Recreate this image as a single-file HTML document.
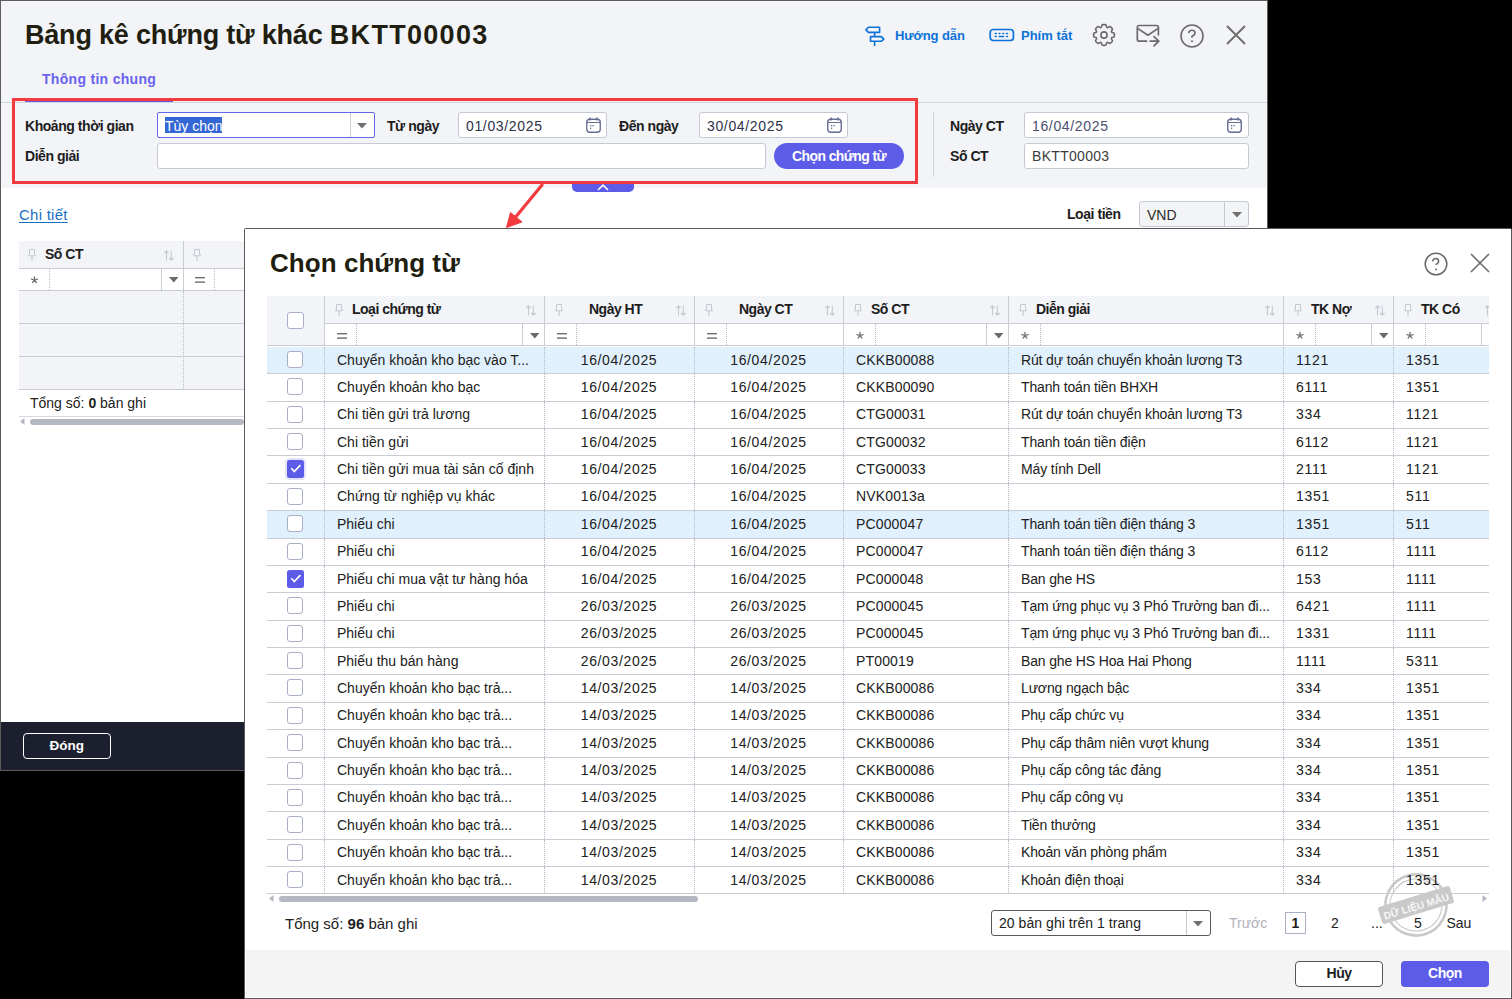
<!DOCTYPE html>
<html><head><meta charset="utf-8"><style>*{box-sizing:border-box;margin:0;padding:0}
html,body{width:1512px;height:999px;overflow:hidden;background:#000;font-family:"Liberation Sans",sans-serif;color:#212121}
body{position:relative}
.a{position:absolute}
.t{position:absolute;white-space:nowrap;line-height:1}
svg{position:absolute;overflow:visible}
b{font-weight:bold}</style></head>
<body>
<div class="a" style="left:0px;top:0px;width:1268px;height:771px;background:#5c5c5c"></div>
<div class="a" style="left:1px;top:1px;width:1266px;height:769px;background:#fff"></div>
<div class="a" style="left:1px;top:1px;width:1266px;height:187px;background:#f3f4f8"></div>
<div class="a" style="left:1px;top:102px;width:1266px;height:1px;background:#d3d6de"></div>
<div class="t" style="left:25px;top:22.14px;font-size:27px;font-weight:bold;color:#1f1e10;"><span style="letter-spacing:-0.2px">Bảng kê chứng từ khác </span><span style="letter-spacing:1.3px">BKTT00003</span></div>
<div class="t" style="left:42px;top:72.15px;font-size:14px;font-weight:bold;color:#6a63ee;letter-spacing:0.3px;">Thông tin chung</div>
<div class="a" style="left:25px;top:100px;width:148px;height:2px;background:#5b5ce6"></div>
<svg style="left:860px;top:22px" width="30" height="28" viewBox="0 0 30 28"><path d="M8.4 5.3 H19.6 V10.4 H8.4 L5.9 7.9 Z M10.5 14.6 H21.3 L23.8 17.1 L21.3 19.3 H10.5 Z M14.6 10.4 V14.6 M14.6 19.3 V23.4" fill="none" stroke="#0b72d9" stroke-width="1.6" stroke-linejoin="round" stroke-linecap="round"/></svg>
<div class="t" style="left:895px;top:29.00px;font-size:13px;font-weight:bold;color:#0b72d9;letter-spacing:-0.1px;">Hướng dẫn</div>
<svg style="left:989px;top:28px" width="26" height="14" viewBox="0 0 26 14"><rect x="1.2" y="1.5" width="23.2" height="11" rx="3" fill="none" stroke="#0b72d9" stroke-width="1.7"/><path d="M6.3 5.5h1M10 5.5h1M13.8 5.5h1M17.5 5.5h1M6.3 8.5h1M10.2 8.5h4.4M17.5 8.5h1" stroke="#0b72d9" stroke-width="1.5" stroke-linecap="round"/></svg>
<div class="t" style="left:1021px;top:29.00px;font-size:13px;font-weight:bold;color:#0b72d9;">Phím tắt</div>
<svg style="left:1092px;top:23px" width="24" height="24" viewBox="0 0 24 24"><path d="M12.00 1.60 L12.27 1.60 L12.54 1.61 L12.82 1.63 L13.09 1.66 L13.36 1.69 L13.63 1.73 L13.87 1.91 L14.07 2.24 L14.24 2.69 L14.36 3.18 L14.47 3.65 L14.58 4.05 L14.72 4.32 L14.90 4.44 L15.10 4.52 L15.29 4.60 L15.51 4.64 L15.80 4.55 L16.15 4.35 L16.57 4.09 L17.00 3.83 L17.43 3.63 L17.81 3.54 L18.11 3.59 L18.33 3.75 L18.54 3.92 L18.75 4.09 L18.96 4.27 L19.16 4.46 L19.35 4.65 L19.54 4.84 L19.73 5.04 L19.91 5.25 L20.08 5.46 L20.25 5.67 L20.41 5.89 L20.46 6.19 L20.37 6.57 L20.17 7.00 L19.91 7.43 L19.65 7.85 L19.45 8.20 L19.36 8.49 L19.40 8.71 L19.48 8.90 L19.56 9.10 L19.68 9.28 L19.95 9.42 L20.35 9.53 L20.82 9.64 L21.31 9.76 L21.76 9.93 L22.09 10.13 L22.27 10.37 L22.31 10.64 L22.34 10.91 L22.37 11.18 L22.39 11.46 L22.40 11.73 L22.40 12.00 L22.40 12.27 L22.39 12.54 L22.37 12.82 L22.34 13.09 L22.31 13.36 L22.27 13.63 L22.09 13.87 L21.76 14.07 L21.31 14.24 L20.82 14.36 L20.35 14.47 L19.95 14.58 L19.68 14.72 L19.56 14.90 L19.48 15.10 L19.40 15.29 L19.36 15.51 L19.45 15.80 L19.65 16.15 L19.91 16.57 L20.17 17.00 L20.37 17.43 L20.46 17.81 L20.41 18.11 L20.25 18.33 L20.08 18.54 L19.91 18.75 L19.73 18.96 L19.54 19.16 L19.35 19.35 L19.16 19.54 L18.96 19.73 L18.75 19.91 L18.54 20.08 L18.33 20.25 L18.11 20.41 L17.81 20.46 L17.43 20.37 L17.00 20.17 L16.57 19.91 L16.15 19.65 L15.80 19.45 L15.51 19.36 L15.29 19.40 L15.10 19.48 L14.90 19.56 L14.72 19.68 L14.58 19.95 L14.47 20.35 L14.36 20.82 L14.24 21.31 L14.07 21.76 L13.87 22.09 L13.63 22.27 L13.36 22.31 L13.09 22.34 L12.82 22.37 L12.54 22.39 L12.27 22.40 L12.00 22.40 L11.73 22.40 L11.46 22.39 L11.18 22.37 L10.91 22.34 L10.64 22.31 L10.37 22.27 L10.13 22.09 L9.93 21.76 L9.76 21.31 L9.64 20.82 L9.53 20.35 L9.42 19.95 L9.28 19.68 L9.10 19.56 L8.90 19.48 L8.71 19.40 L8.49 19.36 L8.20 19.45 L7.85 19.65 L7.43 19.91 L7.00 20.17 L6.57 20.37 L6.19 20.46 L5.89 20.41 L5.67 20.25 L5.46 20.08 L5.25 19.91 L5.04 19.73 L4.84 19.54 L4.65 19.35 L4.46 19.16 L4.27 18.96 L4.09 18.75 L3.92 18.54 L3.75 18.33 L3.59 18.11 L3.54 17.81 L3.63 17.43 L3.83 17.00 L4.09 16.57 L4.35 16.15 L4.55 15.80 L4.64 15.51 L4.60 15.29 L4.52 15.10 L4.44 14.90 L4.32 14.72 L4.05 14.58 L3.65 14.47 L3.18 14.36 L2.69 14.24 L2.24 14.07 L1.91 13.87 L1.73 13.63 L1.69 13.36 L1.66 13.09 L1.63 12.82 L1.61 12.54 L1.60 12.27 L1.60 12.00 L1.60 11.73 L1.61 11.46 L1.63 11.18 L1.66 10.91 L1.69 10.64 L1.73 10.37 L1.91 10.13 L2.24 9.93 L2.69 9.76 L3.18 9.64 L3.65 9.53 L4.05 9.42 L4.32 9.28 L4.44 9.10 L4.52 8.90 L4.60 8.71 L4.64 8.49 L4.55 8.20 L4.35 7.85 L4.09 7.43 L3.83 7.00 L3.63 6.57 L3.54 6.19 L3.59 5.89 L3.75 5.67 L3.92 5.46 L4.09 5.25 L4.27 5.04 L4.46 4.84 L4.65 4.65 L4.84 4.46 L5.04 4.27 L5.25 4.09 L5.46 3.92 L5.67 3.75 L5.89 3.59 L6.19 3.54 L6.57 3.63 L7.00 3.83 L7.43 4.09 L7.85 4.35 L8.20 4.55 L8.49 4.64 L8.71 4.60 L8.90 4.52 L9.10 4.44 L9.28 4.32 L9.42 4.05 L9.53 3.65 L9.64 3.18 L9.76 2.69 L9.93 2.24 L10.13 1.91 L10.37 1.73 L10.64 1.69 L10.91 1.66 L11.18 1.63 L11.46 1.61 L11.73 1.60 Z" fill="none" stroke="#6b6b6b" stroke-width="1.6" stroke-linejoin="round"/><circle cx="12" cy="12" r="3.1" fill="none" stroke="#6b6b6b" stroke-width="1.6"/></svg>
<svg style="left:1136px;top:24.3px" width="25" height="24" viewBox="0 0 25 24"><path d="M10.6 17.2 H3.3 Q1.3 17.2 1.3 15.2 V3.3 Q1.3 1.5 3.3 1.5 H20.6 Q22.4 1.5 22.4 3.3 V10.8" fill="none" stroke="#6b6b6b" stroke-width="1.7" stroke-linecap="round"/><path d="M1.6 4.4 L11.9 11.2 L22.1 4.4" fill="none" stroke="#6b6b6b" stroke-width="1.7" stroke-linejoin="round"/><path d="M14.3 17.2 H22.8 M18 12.6 L22.8 17.2 L18 21.8" fill="none" stroke="#6b6b6b" stroke-width="1.7" stroke-linecap="round" stroke-linejoin="round"/></svg>
<svg style="left:1180px;top:24px" width="24" height="24" viewBox="0 0 24 24"><circle cx="12" cy="12" r="11" fill="none" stroke="#6b6b6b" stroke-width="1.6"/><path d="M8.6 9.2 Q9 6.3 12 6.3 Q15 6.3 15 9 Q15 11 12 12.2 V13.8" fill="none" stroke="#6b6b6b" stroke-width="1.6"/><circle cx="12" cy="17.3" r="1" fill="#6b6b6b"/></svg>
<svg style="left:1226px;top:25px" width="20" height="20" viewBox="0 0 20 20"><path d="M1 1 L19 19 M19 1 L1 19" stroke="#6b6b6b" stroke-width="1.8"/></svg>
<div class="t" style="left:25px;top:119.15px;font-size:14px;font-weight:bold;color:#1d1d1d;letter-spacing:-0.45px;">Khoảng thời gian</div>
<div class="a" style="left:157px;top:112px;width:218px;height:26px;background:#fff;border:1px solid #6466e8;border-radius:2px"></div>
<div class="a" style="left:350px;top:113px;width:1px;height:24px;background:#c9ccd6"></div>
<svg style="left:357.0px;top:122.75px" width="10" height="5.5" viewBox="0 0 10 5.5"><path d="M0 0 L10 0 L5.0 5.5 Z" fill="#707070"/></svg>
<div class="a" style="left:165px;top:117px;width:57px;height:16px;background:#3367d6"></div>
<div class="t" style="left:165px;top:118.65px;font-size:14px;color:#fff;">Tùy chọn</div>
<div class="t" style="left:387px;top:119.15px;font-size:14px;font-weight:bold;color:#1d1d1d;letter-spacing:-0.45px;">Từ ngày</div>
<div class="a" style="left:458px;top:112px;width:149px;height:26px;background:#fff;border:1px solid #c6c9d4;border-radius:3px"></div>
<div class="t" style="left:466px;top:118.65px;font-size:14px;color:#2d3148;letter-spacing:0.65px;">01/03/2025</div>
<svg style="left:586px;top:117px" width="15" height="16" viewBox="0 0 15 16"><rect x="0.75" y="2.25" width="13.5" height="13" rx="3" fill="none" stroke="#666b90" stroke-width="1.35"/><line x1="4" y1="0.5" x2="4" y2="3.5" stroke="#666b90" stroke-width="1.5"/><line x1="11" y1="0.5" x2="11" y2="3.5" stroke="#666b90" stroke-width="1.5"/><line x1="1" y1="5.5" x2="14" y2="5.5" stroke="#666b90" stroke-width="1"/><rect x="4" y="8" width="1.3" height="1.3" fill="#666b90"/><rect x="6.5" y="8" width="1.3" height="1.3" fill="#666b90"/><rect x="4" y="10.6" width="1.3" height="1.3" fill="#666b90"/></svg>
<div class="t" style="left:619px;top:119.15px;font-size:14px;font-weight:bold;color:#1d1d1d;letter-spacing:-0.45px;">Đến ngày</div>
<div class="a" style="left:699px;top:112px;width:149px;height:26px;background:#fff;border:1px solid #c6c9d4;border-radius:3px"></div>
<div class="t" style="left:707px;top:118.65px;font-size:14px;color:#2d3148;letter-spacing:0.65px;">30/04/2025</div>
<svg style="left:827px;top:117px" width="15" height="16" viewBox="0 0 15 16"><rect x="0.75" y="2.25" width="13.5" height="13" rx="3" fill="none" stroke="#666b90" stroke-width="1.35"/><line x1="4" y1="0.5" x2="4" y2="3.5" stroke="#666b90" stroke-width="1.5"/><line x1="11" y1="0.5" x2="11" y2="3.5" stroke="#666b90" stroke-width="1.5"/><line x1="1" y1="5.5" x2="14" y2="5.5" stroke="#666b90" stroke-width="1"/><rect x="4" y="8" width="1.3" height="1.3" fill="#666b90"/><rect x="6.5" y="8" width="1.3" height="1.3" fill="#666b90"/><rect x="4" y="10.6" width="1.3" height="1.3" fill="#666b90"/></svg>
<div class="t" style="left:25px;top:149.15px;font-size:14px;font-weight:bold;color:#1d1d1d;letter-spacing:-0.45px;">Diễn giải</div>
<div class="a" style="left:157px;top:143px;width:609px;height:26px;background:#fff;border:1px solid #c6c9d4;border-radius:3px"></div>
<div class="a" style="left:774px;top:143px;width:130px;height:26px;background:#5c5ce8;border-radius:13px"></div>
<div class="t" style="left:792px;top:149.15px;font-size:14px;font-weight:bold;color:#fff;letter-spacing:-0.6px;">Chọn chứng từ</div>
<div class="a" style="left:933px;top:112px;width:1px;height:65px;background:#cfd2db"></div>
<div class="t" style="left:950px;top:119.15px;font-size:14px;font-weight:bold;color:#1d1d1d;letter-spacing:-0.45px;">Ngày CT</div>
<div class="a" style="left:1024px;top:112px;width:225px;height:26px;background:#fff;border:1px solid #c6c9d4;border-radius:3px"></div>
<div class="t" style="left:1032px;top:118.65px;font-size:14px;color:#4a4f6e;letter-spacing:0.65px;">16/04/2025</div>
<svg style="left:1227px;top:117px" width="15" height="16" viewBox="0 0 15 16"><rect x="0.75" y="2.25" width="13.5" height="13" rx="3" fill="none" stroke="#666b90" stroke-width="1.35"/><line x1="4" y1="0.5" x2="4" y2="3.5" stroke="#666b90" stroke-width="1.5"/><line x1="11" y1="0.5" x2="11" y2="3.5" stroke="#666b90" stroke-width="1.5"/><line x1="1" y1="5.5" x2="14" y2="5.5" stroke="#666b90" stroke-width="1"/><rect x="4" y="8" width="1.3" height="1.3" fill="#666b90"/><rect x="6.5" y="8" width="1.3" height="1.3" fill="#666b90"/><rect x="4" y="10.6" width="1.3" height="1.3" fill="#666b90"/></svg>
<div class="t" style="left:950px;top:149.15px;font-size:14px;font-weight:bold;color:#1d1d1d;letter-spacing:-0.45px;">Số CT</div>
<div class="a" style="left:1024px;top:143px;width:225px;height:26px;background:#fff;border:1px solid #c6c9d4;border-radius:3px"></div>
<div class="t" style="left:1032px;top:149.15px;font-size:14px;color:#3c3c3c;letter-spacing:0.3px;">BKTT00003</div>
<div class="a" style="left:12px;top:98px;width:906px;height:86px;border:3px solid #f23b3f"></div>
<div class="a" style="left:572px;top:184px;width:62px;height:8px;background:#5c5ce8;border-radius:0 0 5px 5px"></div>
<svg style="left:597px;top:184px" width="12" height="7" viewBox="0 0 12 7"><path d="M1 6 L6 1.2 L11 6" fill="none" stroke="#fff" stroke-width="1.6"/></svg>
<div class="t" style="left:19px;top:207.30px;font-size:15px;color:#1a6fc4;letter-spacing:0.25px;text-decoration:underline;text-underline-offset:2px">Chi tiết</div>
<div class="t" style="left:1067px;top:207.15px;font-size:14px;font-weight:bold;color:#1d1d1d;letter-spacing:-0.45px;">Loại tiền</div>
<div class="a" style="left:1139px;top:201px;width:110px;height:26px;background:#f3f4f6;border:1px solid #c6c9d4;border-radius:3px"></div>
<div class="a" style="left:1224px;top:202px;width:1px;height:24px;background:#c6c9d4"></div>
<div class="t" style="left:1147px;top:207.65px;font-size:14px;color:#2a2a2a;">VND</div>
<svg style="left:1231.5px;top:211.75px" width="10" height="5.5" viewBox="0 0 10 5.5"><path d="M0 0 L10 0 L5.0 5.5 Z" fill="#707070"/></svg>
<div class="a" style="left:19px;top:241px;width:225px;height:27px;background:#f3f4f8"></div>
<div class="a" style="left:19px;top:268px;width:225px;height:1px;background:#c9ccd4"></div>
<div class="a" style="left:183px;top:241px;width:1px;height:49px;background:#c9ccd4"></div>
<svg style="left:28px;top:249px" width="8" height="12" viewBox="0 0 8 12"><path d="M1.5 0.5 H6.5 V5 L7.5 6.8 H0.5 L1.5 5 Z" fill="none" stroke="#c5c8d0" stroke-width="1"/><line x1="4" y1="6.8" x2="4" y2="11.8" stroke="#c5c8d0" stroke-width="1.2"/></svg>
<div class="t" style="left:45px;top:247.15px;font-size:14px;font-weight:bold;color:#1d1d1d;letter-spacing:-0.5px;">Số CT</div>
<svg style="left:164px;top:250px" width="10" height="11" viewBox="0 0 10 11"><path d="M2.5 10.5 V0.8 M0.3 3 L2.5 0.8 L4.7 3" fill="none" stroke="#c5c8d0" stroke-width="1.1"/><path d="M7.3 0.5 V10.2 M5.1 8 L7.3 10.2 L9.5 8" fill="none" stroke="#c5c8d0" stroke-width="1.1"/></svg>
<svg style="left:0;top:0" width="1" height="1"><path d="M34.50 280.00 L34.50 276.80 M34.50 280.00 L37.54 279.01 M34.50 280.00 L36.38 282.59 M34.50 280.00 L32.62 282.59 M34.50 280.00 L31.46 279.01 " stroke="#707070" stroke-width="1.3" stroke-linecap="round"/></svg>
<div class="a" style="left:49px;top:269px;width:1px;height:21px;border-left:1px dotted #b8bcc6"></div>
<div class="a" style="left:161px;top:269px;width:1px;height:21px;background:#c9ccd4"></div>
<svg style="left:168.75px;top:276.75px" width="9.5" height="5.5" viewBox="0 0 9.5 5.5"><path d="M0 0 L9.5 0 L4.75 5.5 Z" fill="#6b6b6b"/></svg>
<svg style="left:193px;top:249px" width="8" height="12" viewBox="0 0 8 12"><path d="M1.5 0.5 H6.5 V5 L7.5 6.8 H0.5 L1.5 5 Z" fill="none" stroke="#c5c8d0" stroke-width="1"/><line x1="4" y1="6.8" x2="4" y2="11.8" stroke="#c5c8d0" stroke-width="1.2"/></svg>
<svg style="left:195px;top:277px" width="10" height="6" viewBox="0 0 10 6"><rect x="0" y="0" width="10" height="1.4" fill="#6e6e6e"/><rect x="0" y="4.4" width="10" height="1.4" fill="#6e6e6e"/></svg>
<div class="a" style="left:214px;top:269px;width:1px;height:21px;border-left:1px dotted #b8bcc6"></div>
<div class="a" style="left:19px;top:290px;width:225px;height:1px;background:#c9ccd4"></div>
<div class="a" style="left:19px;top:291px;width:225px;height:99px;background:#f3f4f8"></div>
<div class="a" style="left:19px;top:323px;width:225px;height:1px;background:#c9ccd4"></div>
<div class="a" style="left:19px;top:356px;width:225px;height:1px;background:#c9ccd4"></div>
<div class="a" style="left:19px;top:389px;width:225px;height:1px;background:#c9ccd4"></div>
<div class="a" style="left:183px;top:291px;width:1px;height:98px;border-left:1px dotted #b8bcc6"></div>
<div class="t" style="left:30px;top:396.15px;font-size:14px;color:#212121;">Tổng số: <b>0</b> bản ghi</div>
<div class="a" style="left:19px;top:416px;width:225px;height:1px;background:#d7d9df"></div>
<svg style="left:20px;top:418px" width="5" height="7" viewBox="0 0 5 7"><path d="M4.5 0 V7 L0 3.5 Z" fill="#b3b8c2"/></svg>
<div class="a" style="left:30px;top:419px;width:214px;height:6px;background:#b3b8c2;border-radius:3px"></div>
<div class="a" style="left:1px;top:722px;width:1266px;height:48px;background:#1c1f2d"></div>
<div class="a" style="left:23px;top:733px;width:88px;height:26px;border:1.5px solid #fff;border-radius:4px"></div>
<div class="t" style="left:49.5px;top:738.57px;font-size:13.5px;font-weight:bold;color:#fff;">Đóng</div>
<svg style="left:0;top:0" width="1512" height="999" viewBox="0 0 1512 999"><path d="M542 185 L514 219" stroke="#f23b3f" stroke-width="3.2" stroke-linecap="round"/><path d="M506.5 227.5 L510.5 212.5 L522 222 Z" fill="#f23b3f" stroke="#f23b3f" stroke-width="1" stroke-linejoin="round"/></svg>
<div class="a" style="left:244px;top:228px;width:1268px;height:771px;background:#585858;border-radius:2px 2px 0 0"></div>
<div class="a" style="left:245px;top:229px;width:1266px;height:769px;background:#fff"></div>
<div class="a" style="left:246px;top:950px;width:1264px;height:47px;background:#f4f4f4"></div>
<svg style="left:1376px;top:865px;opacity:0.9" width="80" height="80" viewBox="0 0 80 80"><g transform="rotate(-17 40 40)"><circle cx="40" cy="40" r="30.5" fill="none" stroke="#c4c4c4" stroke-width="2.6"/><circle cx="40" cy="40" r="26" fill="none" stroke="#c4c4c4" stroke-width="1.1"/><rect x="2.5" y="31" width="75" height="18" rx="2.5" fill="#c4c4c4"/><text x="40" y="45" text-anchor="middle" font-family="Liberation Sans" font-weight="bold" font-size="10.2" fill="#f6f6f6">DỮ LIỆU MẪU</text></g></svg>
<div class="t" style="left:270px;top:249.99px;font-size:26px;font-weight:bold;color:#1f1e10;letter-spacing:0.05px;">Chọn chứng từ</div>
<svg style="left:1424px;top:252px" width="24" height="24" viewBox="0 0 24 24"><circle cx="12" cy="12" r="10.8" fill="none" stroke="#6b6b6b" stroke-width="1.5"/><path d="M8.6 9.4 Q9.2 6.6 12 6.6 Q14.6 6.6 14.6 9.2 Q14.6 11.2 11.6 12.6" fill="none" stroke="#6b6b6b" stroke-width="1.5"/><circle cx="12" cy="17.5" r="0.95" fill="#6b6b6b"/></svg>
<svg style="left:1470px;top:253px" width="20" height="20" viewBox="0 0 20 20"><path d="M1 1 L19 19 M19 1 L1 19" stroke="#6b6b6b" stroke-width="1.6"/></svg>
<div class="a" style="left:267px;top:296px;width:1222px;height:27px;background:#f3f4f8"></div>
<div class="a" style="left:267px;top:296px;width:57px;height:49px;background:#f3f4f8"></div>
<div class="a" style="left:325px;top:323px;width:1164px;height:1px;background:#c9ccd4"></div>
<div class="a" style="left:267px;top:345px;width:1222px;height:1px;background:#c9ccd4"></div>
<div class="a" style="left:324px;top:296px;width:1px;height:49px;background:#c9ccd4"></div>
<div class="a" style="left:544px;top:296px;width:1px;height:49px;background:#c9ccd4"></div>
<div class="a" style="left:694px;top:296px;width:1px;height:49px;background:#c9ccd4"></div>
<div class="a" style="left:843px;top:296px;width:1px;height:49px;background:#c9ccd4"></div>
<div class="a" style="left:1008px;top:296px;width:1px;height:49px;background:#c9ccd4"></div>
<div class="a" style="left:1283px;top:296px;width:1px;height:49px;background:#c9ccd4"></div>
<div class="a" style="left:1393px;top:296px;width:1px;height:49px;background:#c9ccd4"></div>
<div class="a" style="left:287px;top:312px;width:17px;height:17px;background:#fff;border:1.3px solid #a9aec8;border-radius:3px"></div>
<svg style="left:335px;top:304px" width="8" height="12" viewBox="0 0 8 12"><path d="M1.5 0.5 H6.5 V5 L7.5 6.8 H0.5 L1.5 5 Z" fill="none" stroke="#c5c8d0" stroke-width="1"/><line x1="4" y1="6.8" x2="4" y2="11.8" stroke="#c5c8d0" stroke-width="1.2"/></svg>
<div class="t" style="left:352px;top:302.15px;font-size:14px;font-weight:bold;color:#1d1d1d;letter-spacing:-0.5px;">Loại chứng từ</div>
<svg style="left:526px;top:305px" width="10" height="11" viewBox="0 0 10 11"><path d="M2.5 10.5 V0.8 M0.3 3 L2.5 0.8 L4.7 3" fill="none" stroke="#c5c8d0" stroke-width="1.1"/><path d="M7.3 0.5 V10.2 M5.1 8 L7.3 10.2 L9.5 8" fill="none" stroke="#c5c8d0" stroke-width="1.1"/></svg>
<svg style="left:337px;top:333px" width="10" height="6" viewBox="0 0 10 6"><rect x="0" y="0" width="10" height="1.4" fill="#6e6e6e"/><rect x="0" y="4.4" width="10" height="1.4" fill="#6e6e6e"/></svg>
<div class="a" style="left:356px;top:324px;width:1px;height:21px;border-left:1px dotted #b5b9c4"></div>
<div class="a" style="left:522px;top:324px;width:1px;height:21px;background:#c9ccd4"></div>
<svg style="left:530.25px;top:332.75px" width="9.5" height="5.5" viewBox="0 0 9.5 5.5"><path d="M0 0 L9.5 0 L4.75 5.5 Z" fill="#6b6b6b"/></svg>
<svg style="left:555px;top:304px" width="8" height="12" viewBox="0 0 8 12"><path d="M1.5 0.5 H6.5 V5 L7.5 6.8 H0.5 L1.5 5 Z" fill="none" stroke="#c5c8d0" stroke-width="1"/><line x1="4" y1="6.8" x2="4" y2="11.8" stroke="#c5c8d0" stroke-width="1.2"/></svg>
<div class="t" style="left:589px;top:302.15px;font-size:14px;font-weight:bold;color:#1d1d1d;letter-spacing:-0.5px;">Ngày HT</div>
<svg style="left:676px;top:305px" width="10" height="11" viewBox="0 0 10 11"><path d="M2.5 10.5 V0.8 M0.3 3 L2.5 0.8 L4.7 3" fill="none" stroke="#c5c8d0" stroke-width="1.1"/><path d="M7.3 0.5 V10.2 M5.1 8 L7.3 10.2 L9.5 8" fill="none" stroke="#c5c8d0" stroke-width="1.1"/></svg>
<svg style="left:557px;top:333px" width="10" height="6" viewBox="0 0 10 6"><rect x="0" y="0" width="10" height="1.4" fill="#6e6e6e"/><rect x="0" y="4.4" width="10" height="1.4" fill="#6e6e6e"/></svg>
<div class="a" style="left:576px;top:324px;width:1px;height:21px;border-left:1px dotted #b5b9c4"></div>
<svg style="left:705px;top:304px" width="8" height="12" viewBox="0 0 8 12"><path d="M1.5 0.5 H6.5 V5 L7.5 6.8 H0.5 L1.5 5 Z" fill="none" stroke="#c5c8d0" stroke-width="1"/><line x1="4" y1="6.8" x2="4" y2="11.8" stroke="#c5c8d0" stroke-width="1.2"/></svg>
<div class="t" style="left:739px;top:302.15px;font-size:14px;font-weight:bold;color:#1d1d1d;letter-spacing:-0.5px;">Ngày CT</div>
<svg style="left:825px;top:305px" width="10" height="11" viewBox="0 0 10 11"><path d="M2.5 10.5 V0.8 M0.3 3 L2.5 0.8 L4.7 3" fill="none" stroke="#c5c8d0" stroke-width="1.1"/><path d="M7.3 0.5 V10.2 M5.1 8 L7.3 10.2 L9.5 8" fill="none" stroke="#c5c8d0" stroke-width="1.1"/></svg>
<svg style="left:707px;top:333px" width="10" height="6" viewBox="0 0 10 6"><rect x="0" y="0" width="10" height="1.4" fill="#6e6e6e"/><rect x="0" y="4.4" width="10" height="1.4" fill="#6e6e6e"/></svg>
<div class="a" style="left:726px;top:324px;width:1px;height:21px;border-left:1px dotted #b5b9c4"></div>
<svg style="left:854px;top:304px" width="8" height="12" viewBox="0 0 8 12"><path d="M1.5 0.5 H6.5 V5 L7.5 6.8 H0.5 L1.5 5 Z" fill="none" stroke="#c5c8d0" stroke-width="1"/><line x1="4" y1="6.8" x2="4" y2="11.8" stroke="#c5c8d0" stroke-width="1.2"/></svg>
<div class="t" style="left:871px;top:302.15px;font-size:14px;font-weight:bold;color:#1d1d1d;letter-spacing:-0.5px;">Số CT</div>
<svg style="left:990px;top:305px" width="10" height="11" viewBox="0 0 10 11"><path d="M2.5 10.5 V0.8 M0.3 3 L2.5 0.8 L4.7 3" fill="none" stroke="#c5c8d0" stroke-width="1.1"/><path d="M7.3 0.5 V10.2 M5.1 8 L7.3 10.2 L9.5 8" fill="none" stroke="#c5c8d0" stroke-width="1.1"/></svg>
<svg style="left:0;top:0" width="1" height="1"><path d="M860.00 335.50 L860.00 332.30 M860.00 335.50 L863.04 334.51 M860.00 335.50 L861.88 338.09 M860.00 335.50 L858.12 338.09 M860.00 335.50 L856.96 334.51 " stroke="#707070" stroke-width="1.3" stroke-linecap="round"/></svg>
<div class="a" style="left:875px;top:324px;width:1px;height:21px;border-left:1px dotted #b5b9c4"></div>
<div class="a" style="left:986px;top:324px;width:1px;height:21px;background:#c9ccd4"></div>
<svg style="left:994.25px;top:332.75px" width="9.5" height="5.5" viewBox="0 0 9.5 5.5"><path d="M0 0 L9.5 0 L4.75 5.5 Z" fill="#6b6b6b"/></svg>
<svg style="left:1019px;top:304px" width="8" height="12" viewBox="0 0 8 12"><path d="M1.5 0.5 H6.5 V5 L7.5 6.8 H0.5 L1.5 5 Z" fill="none" stroke="#c5c8d0" stroke-width="1"/><line x1="4" y1="6.8" x2="4" y2="11.8" stroke="#c5c8d0" stroke-width="1.2"/></svg>
<div class="t" style="left:1036px;top:302.15px;font-size:14px;font-weight:bold;color:#1d1d1d;letter-spacing:-0.5px;">Diễn giải</div>
<svg style="left:1265px;top:305px" width="10" height="11" viewBox="0 0 10 11"><path d="M2.5 10.5 V0.8 M0.3 3 L2.5 0.8 L4.7 3" fill="none" stroke="#c5c8d0" stroke-width="1.1"/><path d="M7.3 0.5 V10.2 M5.1 8 L7.3 10.2 L9.5 8" fill="none" stroke="#c5c8d0" stroke-width="1.1"/></svg>
<svg style="left:0;top:0" width="1" height="1"><path d="M1025.00 335.50 L1025.00 332.30 M1025.00 335.50 L1028.04 334.51 M1025.00 335.50 L1026.88 338.09 M1025.00 335.50 L1023.12 338.09 M1025.00 335.50 L1021.96 334.51 " stroke="#707070" stroke-width="1.3" stroke-linecap="round"/></svg>
<div class="a" style="left:1040px;top:324px;width:1px;height:21px;border-left:1px dotted #b5b9c4"></div>
<svg style="left:1294px;top:304px" width="8" height="12" viewBox="0 0 8 12"><path d="M1.5 0.5 H6.5 V5 L7.5 6.8 H0.5 L1.5 5 Z" fill="none" stroke="#c5c8d0" stroke-width="1"/><line x1="4" y1="6.8" x2="4" y2="11.8" stroke="#c5c8d0" stroke-width="1.2"/></svg>
<div class="t" style="left:1311px;top:302.15px;font-size:14px;font-weight:bold;color:#1d1d1d;letter-spacing:-0.5px;">TK Nợ</div>
<svg style="left:1375px;top:305px" width="10" height="11" viewBox="0 0 10 11"><path d="M2.5 10.5 V0.8 M0.3 3 L2.5 0.8 L4.7 3" fill="none" stroke="#c5c8d0" stroke-width="1.1"/><path d="M7.3 0.5 V10.2 M5.1 8 L7.3 10.2 L9.5 8" fill="none" stroke="#c5c8d0" stroke-width="1.1"/></svg>
<svg style="left:0;top:0" width="1" height="1"><path d="M1300.00 335.50 L1300.00 332.30 M1300.00 335.50 L1303.04 334.51 M1300.00 335.50 L1301.88 338.09 M1300.00 335.50 L1298.12 338.09 M1300.00 335.50 L1296.96 334.51 " stroke="#707070" stroke-width="1.3" stroke-linecap="round"/></svg>
<div class="a" style="left:1315px;top:324px;width:1px;height:21px;border-left:1px dotted #b5b9c4"></div>
<div class="a" style="left:1371px;top:324px;width:1px;height:21px;background:#c9ccd4"></div>
<svg style="left:1379.25px;top:332.75px" width="9.5" height="5.5" viewBox="0 0 9.5 5.5"><path d="M0 0 L9.5 0 L4.75 5.5 Z" fill="#6b6b6b"/></svg>
<svg style="left:1404px;top:304px" width="8" height="12" viewBox="0 0 8 12"><path d="M1.5 0.5 H6.5 V5 L7.5 6.8 H0.5 L1.5 5 Z" fill="none" stroke="#c5c8d0" stroke-width="1"/><line x1="4" y1="6.8" x2="4" y2="11.8" stroke="#c5c8d0" stroke-width="1.2"/></svg>
<div class="t" style="left:1421px;top:302.15px;font-size:14px;font-weight:bold;color:#1d1d1d;letter-spacing:-0.5px;">TK Có</div>
<svg style="left:1485px;top:305px" width="10" height="11" viewBox="0 0 10 11"><path d="M2.5 10.5 V0.8 M0.3 3 L2.5 0.8 L4.7 3" fill="none" stroke="#c5c8d0" stroke-width="1.1"/><path d="M7.3 0.5 V10.2 M5.1 8 L7.3 10.2 L9.5 8" fill="none" stroke="#c5c8d0" stroke-width="1.1"/></svg>
<svg style="left:0;top:0" width="1" height="1"><path d="M1410.00 335.50 L1410.00 332.30 M1410.00 335.50 L1413.04 334.51 M1410.00 335.50 L1411.88 338.09 M1410.00 335.50 L1408.12 338.09 M1410.00 335.50 L1406.96 334.51 " stroke="#707070" stroke-width="1.3" stroke-linecap="round"/></svg>
<div class="a" style="left:1425px;top:324px;width:1px;height:21px;border-left:1px dotted #b5b9c4"></div>
<div class="a" style="left:1481px;top:324px;width:1px;height:21px;background:#c9ccd4"></div>
<div class="a" style="left:267px;top:347px;width:1222px;height:26px;background:#e1f0fd"></div>
<div class="a" style="left:267px;top:373px;width:1222px;height:1px;background:#c9ccd4"></div>
<div class="a" style="left:287px;top:351px;width:16px;height:17px;background:#fff;border:1.3px solid #a9aec8;border-radius:3px"></div>
<div class="t" style="left:337px;top:352.55px;font-size:14px;color:#212121;">Chuyển khoản kho bạc vào T...</div>
<div class="t" style="left:544px;width:150px;text-align:center;top:352.55px;font-size:14px;color:#212121;letter-spacing:0.65px">16/04/2025</div>
<div class="t" style="left:694px;width:149px;text-align:center;top:352.55px;font-size:14px;color:#212121;letter-spacing:0.65px">16/04/2025</div>
<div class="t" style="left:856px;top:352.55px;font-size:14px;color:#212121;letter-spacing:0.15px;">CKKB00088</div>
<div class="t" style="left:1021px;top:352.55px;font-size:14px;color:#212121;letter-spacing:-0.15px;">Rút dự toán chuyển khoản lương T3</div>
<div class="t" style="left:1296px;top:352.55px;font-size:14px;color:#212121;letter-spacing:0.7px;">1121</div>
<div class="t" style="left:1406px;top:352.55px;font-size:14px;color:#212121;letter-spacing:0.7px;">1351</div>
<div class="a" style="left:324px;top:347px;width:1px;height:26px;border-left:1px dotted #b5b9c4"></div>
<div class="a" style="left:544px;top:347px;width:1px;height:26px;border-left:1px dotted #b5b9c4"></div>
<div class="a" style="left:694px;top:347px;width:1px;height:26px;border-left:1px dotted #b5b9c4"></div>
<div class="a" style="left:843px;top:347px;width:1px;height:26px;border-left:1px dotted #b5b9c4"></div>
<div class="a" style="left:1008px;top:347px;width:1px;height:26px;border-left:1px dotted #b5b9c4"></div>
<div class="a" style="left:1283px;top:347px;width:1px;height:26px;border-left:1px dotted #b5b9c4"></div>
<div class="a" style="left:1393px;top:347px;width:1px;height:26px;border-left:1px dotted #b5b9c4"></div>
<div class="a" style="left:267px;top:401px;width:1222px;height:1px;background:#c9ccd4"></div>
<div class="a" style="left:287px;top:378px;width:16px;height:17px;background:#fff;border:1.3px solid #a9aec8;border-radius:3px"></div>
<div class="t" style="left:337px;top:379.92px;font-size:14px;color:#212121;">Chuyển khoản kho bạc</div>
<div class="t" style="left:544px;width:150px;text-align:center;top:379.92px;font-size:14px;color:#212121;letter-spacing:0.65px">16/04/2025</div>
<div class="t" style="left:694px;width:149px;text-align:center;top:379.92px;font-size:14px;color:#212121;letter-spacing:0.65px">16/04/2025</div>
<div class="t" style="left:856px;top:379.92px;font-size:14px;color:#212121;letter-spacing:0.15px;">CKKB00090</div>
<div class="t" style="left:1021px;top:379.92px;font-size:14px;color:#212121;letter-spacing:-0.15px;">Thanh toán tiền BHXH</div>
<div class="t" style="left:1296px;top:379.92px;font-size:14px;color:#212121;letter-spacing:0.7px;">6111</div>
<div class="t" style="left:1406px;top:379.92px;font-size:14px;color:#212121;letter-spacing:0.7px;">1351</div>
<div class="a" style="left:324px;top:374px;width:1px;height:27px;border-left:1px dotted #b5b9c4"></div>
<div class="a" style="left:544px;top:374px;width:1px;height:27px;border-left:1px dotted #b5b9c4"></div>
<div class="a" style="left:694px;top:374px;width:1px;height:27px;border-left:1px dotted #b5b9c4"></div>
<div class="a" style="left:843px;top:374px;width:1px;height:27px;border-left:1px dotted #b5b9c4"></div>
<div class="a" style="left:1008px;top:374px;width:1px;height:27px;border-left:1px dotted #b5b9c4"></div>
<div class="a" style="left:1283px;top:374px;width:1px;height:27px;border-left:1px dotted #b5b9c4"></div>
<div class="a" style="left:1393px;top:374px;width:1px;height:27px;border-left:1px dotted #b5b9c4"></div>
<div class="a" style="left:267px;top:428px;width:1222px;height:1px;background:#c9ccd4"></div>
<div class="a" style="left:287px;top:406px;width:16px;height:17px;background:#fff;border:1.3px solid #a9aec8;border-radius:3px"></div>
<div class="t" style="left:337px;top:407.29px;font-size:14px;color:#212121;">Chi tiền gửi trả lương</div>
<div class="t" style="left:544px;width:150px;text-align:center;top:407.29px;font-size:14px;color:#212121;letter-spacing:0.65px">16/04/2025</div>
<div class="t" style="left:694px;width:149px;text-align:center;top:407.29px;font-size:14px;color:#212121;letter-spacing:0.65px">16/04/2025</div>
<div class="t" style="left:856px;top:407.29px;font-size:14px;color:#212121;letter-spacing:0.15px;">CTG00031</div>
<div class="t" style="left:1021px;top:407.29px;font-size:14px;color:#212121;letter-spacing:-0.15px;">Rút dự toán chuyển khoản lương T3</div>
<div class="t" style="left:1296px;top:407.29px;font-size:14px;color:#212121;letter-spacing:0.7px;">334</div>
<div class="t" style="left:1406px;top:407.29px;font-size:14px;color:#212121;letter-spacing:0.7px;">1121</div>
<div class="a" style="left:324px;top:402px;width:1px;height:26px;border-left:1px dotted #b5b9c4"></div>
<div class="a" style="left:544px;top:402px;width:1px;height:26px;border-left:1px dotted #b5b9c4"></div>
<div class="a" style="left:694px;top:402px;width:1px;height:26px;border-left:1px dotted #b5b9c4"></div>
<div class="a" style="left:843px;top:402px;width:1px;height:26px;border-left:1px dotted #b5b9c4"></div>
<div class="a" style="left:1008px;top:402px;width:1px;height:26px;border-left:1px dotted #b5b9c4"></div>
<div class="a" style="left:1283px;top:402px;width:1px;height:26px;border-left:1px dotted #b5b9c4"></div>
<div class="a" style="left:1393px;top:402px;width:1px;height:26px;border-left:1px dotted #b5b9c4"></div>
<div class="a" style="left:267px;top:455px;width:1222px;height:1px;background:#c9ccd4"></div>
<div class="a" style="left:287px;top:433px;width:16px;height:17px;background:#fff;border:1.3px solid #a9aec8;border-radius:3px"></div>
<div class="t" style="left:337px;top:434.66px;font-size:14px;color:#212121;">Chi tiền gửi</div>
<div class="t" style="left:544px;width:150px;text-align:center;top:434.66px;font-size:14px;color:#212121;letter-spacing:0.65px">16/04/2025</div>
<div class="t" style="left:694px;width:149px;text-align:center;top:434.66px;font-size:14px;color:#212121;letter-spacing:0.65px">16/04/2025</div>
<div class="t" style="left:856px;top:434.66px;font-size:14px;color:#212121;letter-spacing:0.15px;">CTG00032</div>
<div class="t" style="left:1021px;top:434.66px;font-size:14px;color:#212121;letter-spacing:-0.15px;">Thanh toán tiền điện</div>
<div class="t" style="left:1296px;top:434.66px;font-size:14px;color:#212121;letter-spacing:0.7px;">6112</div>
<div class="t" style="left:1406px;top:434.66px;font-size:14px;color:#212121;letter-spacing:0.7px;">1121</div>
<div class="a" style="left:324px;top:429px;width:1px;height:26px;border-left:1px dotted #b5b9c4"></div>
<div class="a" style="left:544px;top:429px;width:1px;height:26px;border-left:1px dotted #b5b9c4"></div>
<div class="a" style="left:694px;top:429px;width:1px;height:26px;border-left:1px dotted #b5b9c4"></div>
<div class="a" style="left:843px;top:429px;width:1px;height:26px;border-left:1px dotted #b5b9c4"></div>
<div class="a" style="left:1008px;top:429px;width:1px;height:26px;border-left:1px dotted #b5b9c4"></div>
<div class="a" style="left:1283px;top:429px;width:1px;height:26px;border-left:1px dotted #b5b9c4"></div>
<div class="a" style="left:1393px;top:429px;width:1px;height:26px;border-left:1px dotted #b5b9c4"></div>
<div class="a" style="left:267px;top:483px;width:1222px;height:1px;background:#c9ccd4"></div>
<div class="a" style="left:287px;top:460px;width:17px;height:17.5px;background:#5c5ce8;border-radius:2.5px;box-shadow:0 0 0 2px #e2e2fb;"></div>
<svg style="left:287px;top:460px" width="17" height="17" viewBox="0 0 17 17"><path d="M4.3 8.3 L7.3 11.6 L13.4 5.2" fill="none" stroke="#fff" stroke-width="1.7"/></svg>
<div class="t" style="left:337px;top:462.03px;font-size:14px;color:#212121;">Chi tiền gửi mua tài sản cố định</div>
<div class="t" style="left:544px;width:150px;text-align:center;top:462.03px;font-size:14px;color:#212121;letter-spacing:0.65px">16/04/2025</div>
<div class="t" style="left:694px;width:149px;text-align:center;top:462.03px;font-size:14px;color:#212121;letter-spacing:0.65px">16/04/2025</div>
<div class="t" style="left:856px;top:462.03px;font-size:14px;color:#212121;letter-spacing:0.15px;">CTG00033</div>
<div class="t" style="left:1021px;top:462.03px;font-size:14px;color:#212121;letter-spacing:-0.15px;">Máy tính Dell</div>
<div class="t" style="left:1296px;top:462.03px;font-size:14px;color:#212121;letter-spacing:0.7px;">2111</div>
<div class="t" style="left:1406px;top:462.03px;font-size:14px;color:#212121;letter-spacing:0.7px;">1121</div>
<div class="a" style="left:324px;top:456px;width:1px;height:27px;border-left:1px dotted #b5b9c4"></div>
<div class="a" style="left:544px;top:456px;width:1px;height:27px;border-left:1px dotted #b5b9c4"></div>
<div class="a" style="left:694px;top:456px;width:1px;height:27px;border-left:1px dotted #b5b9c4"></div>
<div class="a" style="left:843px;top:456px;width:1px;height:27px;border-left:1px dotted #b5b9c4"></div>
<div class="a" style="left:1008px;top:456px;width:1px;height:27px;border-left:1px dotted #b5b9c4"></div>
<div class="a" style="left:1283px;top:456px;width:1px;height:27px;border-left:1px dotted #b5b9c4"></div>
<div class="a" style="left:1393px;top:456px;width:1px;height:27px;border-left:1px dotted #b5b9c4"></div>
<div class="a" style="left:267px;top:510px;width:1222px;height:1px;background:#c9ccd4"></div>
<div class="a" style="left:287px;top:488px;width:16px;height:17px;background:#fff;border:1.3px solid #a9aec8;border-radius:3px"></div>
<div class="t" style="left:337px;top:489.40px;font-size:14px;color:#212121;">Chứng từ nghiệp vụ khác</div>
<div class="t" style="left:544px;width:150px;text-align:center;top:489.40px;font-size:14px;color:#212121;letter-spacing:0.65px">16/04/2025</div>
<div class="t" style="left:694px;width:149px;text-align:center;top:489.40px;font-size:14px;color:#212121;letter-spacing:0.65px">16/04/2025</div>
<div class="t" style="left:856px;top:489.40px;font-size:14px;color:#212121;letter-spacing:0.15px;">NVK0013a</div>
<div class="t" style="left:1021px;top:489.40px;font-size:14px;color:#212121;letter-spacing:-0.15px;"></div>
<div class="t" style="left:1296px;top:489.40px;font-size:14px;color:#212121;letter-spacing:0.7px;">1351</div>
<div class="t" style="left:1406px;top:489.40px;font-size:14px;color:#212121;letter-spacing:0.7px;">511</div>
<div class="a" style="left:324px;top:484px;width:1px;height:26px;border-left:1px dotted #b5b9c4"></div>
<div class="a" style="left:544px;top:484px;width:1px;height:26px;border-left:1px dotted #b5b9c4"></div>
<div class="a" style="left:694px;top:484px;width:1px;height:26px;border-left:1px dotted #b5b9c4"></div>
<div class="a" style="left:843px;top:484px;width:1px;height:26px;border-left:1px dotted #b5b9c4"></div>
<div class="a" style="left:1008px;top:484px;width:1px;height:26px;border-left:1px dotted #b5b9c4"></div>
<div class="a" style="left:1283px;top:484px;width:1px;height:26px;border-left:1px dotted #b5b9c4"></div>
<div class="a" style="left:1393px;top:484px;width:1px;height:26px;border-left:1px dotted #b5b9c4"></div>
<div class="a" style="left:267px;top:511px;width:1222px;height:27px;background:#e1f0fd"></div>
<div class="a" style="left:267px;top:538px;width:1222px;height:1px;background:#c9ccd4"></div>
<div class="a" style="left:287px;top:515px;width:16px;height:17px;background:#fff;border:1.3px solid #a9aec8;border-radius:3px"></div>
<div class="t" style="left:337px;top:516.77px;font-size:14px;color:#212121;">Phiếu chi</div>
<div class="t" style="left:544px;width:150px;text-align:center;top:516.77px;font-size:14px;color:#212121;letter-spacing:0.65px">16/04/2025</div>
<div class="t" style="left:694px;width:149px;text-align:center;top:516.77px;font-size:14px;color:#212121;letter-spacing:0.65px">16/04/2025</div>
<div class="t" style="left:856px;top:516.77px;font-size:14px;color:#212121;letter-spacing:0.15px;">PC000047</div>
<div class="t" style="left:1021px;top:516.77px;font-size:14px;color:#212121;letter-spacing:-0.15px;">Thanh toán tiền điện tháng 3</div>
<div class="t" style="left:1296px;top:516.77px;font-size:14px;color:#212121;letter-spacing:0.7px;">1351</div>
<div class="t" style="left:1406px;top:516.77px;font-size:14px;color:#212121;letter-spacing:0.7px;">511</div>
<div class="a" style="left:324px;top:511px;width:1px;height:27px;border-left:1px dotted #b5b9c4"></div>
<div class="a" style="left:544px;top:511px;width:1px;height:27px;border-left:1px dotted #b5b9c4"></div>
<div class="a" style="left:694px;top:511px;width:1px;height:27px;border-left:1px dotted #b5b9c4"></div>
<div class="a" style="left:843px;top:511px;width:1px;height:27px;border-left:1px dotted #b5b9c4"></div>
<div class="a" style="left:1008px;top:511px;width:1px;height:27px;border-left:1px dotted #b5b9c4"></div>
<div class="a" style="left:1283px;top:511px;width:1px;height:27px;border-left:1px dotted #b5b9c4"></div>
<div class="a" style="left:1393px;top:511px;width:1px;height:27px;border-left:1px dotted #b5b9c4"></div>
<div class="a" style="left:267px;top:565px;width:1222px;height:1px;background:#c9ccd4"></div>
<div class="a" style="left:287px;top:543px;width:16px;height:17px;background:#fff;border:1.3px solid #a9aec8;border-radius:3px"></div>
<div class="t" style="left:337px;top:544.14px;font-size:14px;color:#212121;">Phiếu chi</div>
<div class="t" style="left:544px;width:150px;text-align:center;top:544.14px;font-size:14px;color:#212121;letter-spacing:0.65px">16/04/2025</div>
<div class="t" style="left:694px;width:149px;text-align:center;top:544.14px;font-size:14px;color:#212121;letter-spacing:0.65px">16/04/2025</div>
<div class="t" style="left:856px;top:544.14px;font-size:14px;color:#212121;letter-spacing:0.15px;">PC000047</div>
<div class="t" style="left:1021px;top:544.14px;font-size:14px;color:#212121;letter-spacing:-0.15px;">Thanh toán tiền điện tháng 3</div>
<div class="t" style="left:1296px;top:544.14px;font-size:14px;color:#212121;letter-spacing:0.7px;">6112</div>
<div class="t" style="left:1406px;top:544.14px;font-size:14px;color:#212121;letter-spacing:0.7px;">1111</div>
<div class="a" style="left:324px;top:539px;width:1px;height:26px;border-left:1px dotted #b5b9c4"></div>
<div class="a" style="left:544px;top:539px;width:1px;height:26px;border-left:1px dotted #b5b9c4"></div>
<div class="a" style="left:694px;top:539px;width:1px;height:26px;border-left:1px dotted #b5b9c4"></div>
<div class="a" style="left:843px;top:539px;width:1px;height:26px;border-left:1px dotted #b5b9c4"></div>
<div class="a" style="left:1008px;top:539px;width:1px;height:26px;border-left:1px dotted #b5b9c4"></div>
<div class="a" style="left:1283px;top:539px;width:1px;height:26px;border-left:1px dotted #b5b9c4"></div>
<div class="a" style="left:1393px;top:539px;width:1px;height:26px;border-left:1px dotted #b5b9c4"></div>
<div class="a" style="left:267px;top:592px;width:1222px;height:1px;background:#c9ccd4"></div>
<div class="a" style="left:287px;top:570px;width:17px;height:17.5px;background:#5c5ce8;border-radius:2.5px;"></div>
<svg style="left:287px;top:570px" width="17" height="17" viewBox="0 0 17 17"><path d="M4.3 8.3 L7.3 11.6 L13.4 5.2" fill="none" stroke="#fff" stroke-width="1.7"/></svg>
<div class="t" style="left:337px;top:571.51px;font-size:14px;color:#212121;">Phiếu chi mua vật tư hàng hóa</div>
<div class="t" style="left:544px;width:150px;text-align:center;top:571.51px;font-size:14px;color:#212121;letter-spacing:0.65px">16/04/2025</div>
<div class="t" style="left:694px;width:149px;text-align:center;top:571.51px;font-size:14px;color:#212121;letter-spacing:0.65px">16/04/2025</div>
<div class="t" style="left:856px;top:571.51px;font-size:14px;color:#212121;letter-spacing:0.15px;">PC000048</div>
<div class="t" style="left:1021px;top:571.51px;font-size:14px;color:#212121;letter-spacing:-0.15px;">Ban ghe HS</div>
<div class="t" style="left:1296px;top:571.51px;font-size:14px;color:#212121;letter-spacing:0.7px;">153</div>
<div class="t" style="left:1406px;top:571.51px;font-size:14px;color:#212121;letter-spacing:0.7px;">1111</div>
<div class="a" style="left:324px;top:566px;width:1px;height:26px;border-left:1px dotted #b5b9c4"></div>
<div class="a" style="left:544px;top:566px;width:1px;height:26px;border-left:1px dotted #b5b9c4"></div>
<div class="a" style="left:694px;top:566px;width:1px;height:26px;border-left:1px dotted #b5b9c4"></div>
<div class="a" style="left:843px;top:566px;width:1px;height:26px;border-left:1px dotted #b5b9c4"></div>
<div class="a" style="left:1008px;top:566px;width:1px;height:26px;border-left:1px dotted #b5b9c4"></div>
<div class="a" style="left:1283px;top:566px;width:1px;height:26px;border-left:1px dotted #b5b9c4"></div>
<div class="a" style="left:1393px;top:566px;width:1px;height:26px;border-left:1px dotted #b5b9c4"></div>
<div class="a" style="left:267px;top:620px;width:1222px;height:1px;background:#c9ccd4"></div>
<div class="a" style="left:287px;top:597px;width:16px;height:17px;background:#fff;border:1.3px solid #a9aec8;border-radius:3px"></div>
<div class="t" style="left:337px;top:598.88px;font-size:14px;color:#212121;">Phiếu chi</div>
<div class="t" style="left:544px;width:150px;text-align:center;top:598.88px;font-size:14px;color:#212121;letter-spacing:0.65px">26/03/2025</div>
<div class="t" style="left:694px;width:149px;text-align:center;top:598.88px;font-size:14px;color:#212121;letter-spacing:0.65px">26/03/2025</div>
<div class="t" style="left:856px;top:598.88px;font-size:14px;color:#212121;letter-spacing:0.15px;">PC000045</div>
<div class="t" style="left:1021px;top:598.88px;font-size:14px;color:#212121;letter-spacing:-0.15px;">Tạm ứng phục vụ 3 Phó Trưởng ban đi...</div>
<div class="t" style="left:1296px;top:598.88px;font-size:14px;color:#212121;letter-spacing:0.7px;">6421</div>
<div class="t" style="left:1406px;top:598.88px;font-size:14px;color:#212121;letter-spacing:0.7px;">1111</div>
<div class="a" style="left:324px;top:593px;width:1px;height:27px;border-left:1px dotted #b5b9c4"></div>
<div class="a" style="left:544px;top:593px;width:1px;height:27px;border-left:1px dotted #b5b9c4"></div>
<div class="a" style="left:694px;top:593px;width:1px;height:27px;border-left:1px dotted #b5b9c4"></div>
<div class="a" style="left:843px;top:593px;width:1px;height:27px;border-left:1px dotted #b5b9c4"></div>
<div class="a" style="left:1008px;top:593px;width:1px;height:27px;border-left:1px dotted #b5b9c4"></div>
<div class="a" style="left:1283px;top:593px;width:1px;height:27px;border-left:1px dotted #b5b9c4"></div>
<div class="a" style="left:1393px;top:593px;width:1px;height:27px;border-left:1px dotted #b5b9c4"></div>
<div class="a" style="left:267px;top:647px;width:1222px;height:1px;background:#c9ccd4"></div>
<div class="a" style="left:287px;top:625px;width:16px;height:17px;background:#fff;border:1.3px solid #a9aec8;border-radius:3px"></div>
<div class="t" style="left:337px;top:626.25px;font-size:14px;color:#212121;">Phiếu chi</div>
<div class="t" style="left:544px;width:150px;text-align:center;top:626.25px;font-size:14px;color:#212121;letter-spacing:0.65px">26/03/2025</div>
<div class="t" style="left:694px;width:149px;text-align:center;top:626.25px;font-size:14px;color:#212121;letter-spacing:0.65px">26/03/2025</div>
<div class="t" style="left:856px;top:626.25px;font-size:14px;color:#212121;letter-spacing:0.15px;">PC000045</div>
<div class="t" style="left:1021px;top:626.25px;font-size:14px;color:#212121;letter-spacing:-0.15px;">Tạm ứng phục vụ 3 Phó Trưởng ban đi...</div>
<div class="t" style="left:1296px;top:626.25px;font-size:14px;color:#212121;letter-spacing:0.7px;">1331</div>
<div class="t" style="left:1406px;top:626.25px;font-size:14px;color:#212121;letter-spacing:0.7px;">1111</div>
<div class="a" style="left:324px;top:621px;width:1px;height:26px;border-left:1px dotted #b5b9c4"></div>
<div class="a" style="left:544px;top:621px;width:1px;height:26px;border-left:1px dotted #b5b9c4"></div>
<div class="a" style="left:694px;top:621px;width:1px;height:26px;border-left:1px dotted #b5b9c4"></div>
<div class="a" style="left:843px;top:621px;width:1px;height:26px;border-left:1px dotted #b5b9c4"></div>
<div class="a" style="left:1008px;top:621px;width:1px;height:26px;border-left:1px dotted #b5b9c4"></div>
<div class="a" style="left:1283px;top:621px;width:1px;height:26px;border-left:1px dotted #b5b9c4"></div>
<div class="a" style="left:1393px;top:621px;width:1px;height:26px;border-left:1px dotted #b5b9c4"></div>
<div class="a" style="left:267px;top:674px;width:1222px;height:1px;background:#c9ccd4"></div>
<div class="a" style="left:287px;top:652px;width:16px;height:17px;background:#fff;border:1.3px solid #a9aec8;border-radius:3px"></div>
<div class="t" style="left:337px;top:653.62px;font-size:14px;color:#212121;">Phiếu thu bán hàng</div>
<div class="t" style="left:544px;width:150px;text-align:center;top:653.62px;font-size:14px;color:#212121;letter-spacing:0.65px">26/03/2025</div>
<div class="t" style="left:694px;width:149px;text-align:center;top:653.62px;font-size:14px;color:#212121;letter-spacing:0.65px">26/03/2025</div>
<div class="t" style="left:856px;top:653.62px;font-size:14px;color:#212121;letter-spacing:0.15px;">PT00019</div>
<div class="t" style="left:1021px;top:653.62px;font-size:14px;color:#212121;letter-spacing:-0.15px;">Ban ghe HS Hoa Hai Phong</div>
<div class="t" style="left:1296px;top:653.62px;font-size:14px;color:#212121;letter-spacing:0.7px;">1111</div>
<div class="t" style="left:1406px;top:653.62px;font-size:14px;color:#212121;letter-spacing:0.7px;">5311</div>
<div class="a" style="left:324px;top:648px;width:1px;height:26px;border-left:1px dotted #b5b9c4"></div>
<div class="a" style="left:544px;top:648px;width:1px;height:26px;border-left:1px dotted #b5b9c4"></div>
<div class="a" style="left:694px;top:648px;width:1px;height:26px;border-left:1px dotted #b5b9c4"></div>
<div class="a" style="left:843px;top:648px;width:1px;height:26px;border-left:1px dotted #b5b9c4"></div>
<div class="a" style="left:1008px;top:648px;width:1px;height:26px;border-left:1px dotted #b5b9c4"></div>
<div class="a" style="left:1283px;top:648px;width:1px;height:26px;border-left:1px dotted #b5b9c4"></div>
<div class="a" style="left:1393px;top:648px;width:1px;height:26px;border-left:1px dotted #b5b9c4"></div>
<div class="a" style="left:267px;top:702px;width:1222px;height:1px;background:#c9ccd4"></div>
<div class="a" style="left:287px;top:679px;width:16px;height:17px;background:#fff;border:1.3px solid #a9aec8;border-radius:3px"></div>
<div class="t" style="left:337px;top:680.99px;font-size:14px;color:#212121;">Chuyển khoản kho bạc trả...</div>
<div class="t" style="left:544px;width:150px;text-align:center;top:680.99px;font-size:14px;color:#212121;letter-spacing:0.65px">14/03/2025</div>
<div class="t" style="left:694px;width:149px;text-align:center;top:680.99px;font-size:14px;color:#212121;letter-spacing:0.65px">14/03/2025</div>
<div class="t" style="left:856px;top:680.99px;font-size:14px;color:#212121;letter-spacing:0.15px;">CKKB00086</div>
<div class="t" style="left:1021px;top:680.99px;font-size:14px;color:#212121;letter-spacing:-0.15px;">Lương ngạch bậc</div>
<div class="t" style="left:1296px;top:680.99px;font-size:14px;color:#212121;letter-spacing:0.7px;">334</div>
<div class="t" style="left:1406px;top:680.99px;font-size:14px;color:#212121;letter-spacing:0.7px;">1351</div>
<div class="a" style="left:324px;top:675px;width:1px;height:27px;border-left:1px dotted #b5b9c4"></div>
<div class="a" style="left:544px;top:675px;width:1px;height:27px;border-left:1px dotted #b5b9c4"></div>
<div class="a" style="left:694px;top:675px;width:1px;height:27px;border-left:1px dotted #b5b9c4"></div>
<div class="a" style="left:843px;top:675px;width:1px;height:27px;border-left:1px dotted #b5b9c4"></div>
<div class="a" style="left:1008px;top:675px;width:1px;height:27px;border-left:1px dotted #b5b9c4"></div>
<div class="a" style="left:1283px;top:675px;width:1px;height:27px;border-left:1px dotted #b5b9c4"></div>
<div class="a" style="left:1393px;top:675px;width:1px;height:27px;border-left:1px dotted #b5b9c4"></div>
<div class="a" style="left:267px;top:729px;width:1222px;height:1px;background:#c9ccd4"></div>
<div class="a" style="left:287px;top:707px;width:16px;height:17px;background:#fff;border:1.3px solid #a9aec8;border-radius:3px"></div>
<div class="t" style="left:337px;top:708.36px;font-size:14px;color:#212121;">Chuyển khoản kho bạc trả...</div>
<div class="t" style="left:544px;width:150px;text-align:center;top:708.36px;font-size:14px;color:#212121;letter-spacing:0.65px">14/03/2025</div>
<div class="t" style="left:694px;width:149px;text-align:center;top:708.36px;font-size:14px;color:#212121;letter-spacing:0.65px">14/03/2025</div>
<div class="t" style="left:856px;top:708.36px;font-size:14px;color:#212121;letter-spacing:0.15px;">CKKB00086</div>
<div class="t" style="left:1021px;top:708.36px;font-size:14px;color:#212121;letter-spacing:-0.15px;">Phụ cấp chức vụ</div>
<div class="t" style="left:1296px;top:708.36px;font-size:14px;color:#212121;letter-spacing:0.7px;">334</div>
<div class="t" style="left:1406px;top:708.36px;font-size:14px;color:#212121;letter-spacing:0.7px;">1351</div>
<div class="a" style="left:324px;top:703px;width:1px;height:26px;border-left:1px dotted #b5b9c4"></div>
<div class="a" style="left:544px;top:703px;width:1px;height:26px;border-left:1px dotted #b5b9c4"></div>
<div class="a" style="left:694px;top:703px;width:1px;height:26px;border-left:1px dotted #b5b9c4"></div>
<div class="a" style="left:843px;top:703px;width:1px;height:26px;border-left:1px dotted #b5b9c4"></div>
<div class="a" style="left:1008px;top:703px;width:1px;height:26px;border-left:1px dotted #b5b9c4"></div>
<div class="a" style="left:1283px;top:703px;width:1px;height:26px;border-left:1px dotted #b5b9c4"></div>
<div class="a" style="left:1393px;top:703px;width:1px;height:26px;border-left:1px dotted #b5b9c4"></div>
<div class="a" style="left:267px;top:757px;width:1222px;height:1px;background:#c9ccd4"></div>
<div class="a" style="left:287px;top:734px;width:16px;height:17px;background:#fff;border:1.3px solid #a9aec8;border-radius:3px"></div>
<div class="t" style="left:337px;top:735.73px;font-size:14px;color:#212121;">Chuyển khoản kho bạc trả...</div>
<div class="t" style="left:544px;width:150px;text-align:center;top:735.73px;font-size:14px;color:#212121;letter-spacing:0.65px">14/03/2025</div>
<div class="t" style="left:694px;width:149px;text-align:center;top:735.73px;font-size:14px;color:#212121;letter-spacing:0.65px">14/03/2025</div>
<div class="t" style="left:856px;top:735.73px;font-size:14px;color:#212121;letter-spacing:0.15px;">CKKB00086</div>
<div class="t" style="left:1021px;top:735.73px;font-size:14px;color:#212121;letter-spacing:-0.15px;">Phụ cấp thâm niên vượt khung</div>
<div class="t" style="left:1296px;top:735.73px;font-size:14px;color:#212121;letter-spacing:0.7px;">334</div>
<div class="t" style="left:1406px;top:735.73px;font-size:14px;color:#212121;letter-spacing:0.7px;">1351</div>
<div class="a" style="left:324px;top:730px;width:1px;height:27px;border-left:1px dotted #b5b9c4"></div>
<div class="a" style="left:544px;top:730px;width:1px;height:27px;border-left:1px dotted #b5b9c4"></div>
<div class="a" style="left:694px;top:730px;width:1px;height:27px;border-left:1px dotted #b5b9c4"></div>
<div class="a" style="left:843px;top:730px;width:1px;height:27px;border-left:1px dotted #b5b9c4"></div>
<div class="a" style="left:1008px;top:730px;width:1px;height:27px;border-left:1px dotted #b5b9c4"></div>
<div class="a" style="left:1283px;top:730px;width:1px;height:27px;border-left:1px dotted #b5b9c4"></div>
<div class="a" style="left:1393px;top:730px;width:1px;height:27px;border-left:1px dotted #b5b9c4"></div>
<div class="a" style="left:267px;top:784px;width:1222px;height:1px;background:#c9ccd4"></div>
<div class="a" style="left:287px;top:762px;width:16px;height:17px;background:#fff;border:1.3px solid #a9aec8;border-radius:3px"></div>
<div class="t" style="left:337px;top:763.10px;font-size:14px;color:#212121;">Chuyển khoản kho bạc trả...</div>
<div class="t" style="left:544px;width:150px;text-align:center;top:763.10px;font-size:14px;color:#212121;letter-spacing:0.65px">14/03/2025</div>
<div class="t" style="left:694px;width:149px;text-align:center;top:763.10px;font-size:14px;color:#212121;letter-spacing:0.65px">14/03/2025</div>
<div class="t" style="left:856px;top:763.10px;font-size:14px;color:#212121;letter-spacing:0.15px;">CKKB00086</div>
<div class="t" style="left:1021px;top:763.10px;font-size:14px;color:#212121;letter-spacing:-0.15px;">Phụ cấp công tác đảng</div>
<div class="t" style="left:1296px;top:763.10px;font-size:14px;color:#212121;letter-spacing:0.7px;">334</div>
<div class="t" style="left:1406px;top:763.10px;font-size:14px;color:#212121;letter-spacing:0.7px;">1351</div>
<div class="a" style="left:324px;top:758px;width:1px;height:26px;border-left:1px dotted #b5b9c4"></div>
<div class="a" style="left:544px;top:758px;width:1px;height:26px;border-left:1px dotted #b5b9c4"></div>
<div class="a" style="left:694px;top:758px;width:1px;height:26px;border-left:1px dotted #b5b9c4"></div>
<div class="a" style="left:843px;top:758px;width:1px;height:26px;border-left:1px dotted #b5b9c4"></div>
<div class="a" style="left:1008px;top:758px;width:1px;height:26px;border-left:1px dotted #b5b9c4"></div>
<div class="a" style="left:1283px;top:758px;width:1px;height:26px;border-left:1px dotted #b5b9c4"></div>
<div class="a" style="left:1393px;top:758px;width:1px;height:26px;border-left:1px dotted #b5b9c4"></div>
<div class="a" style="left:267px;top:811px;width:1222px;height:1px;background:#c9ccd4"></div>
<div class="a" style="left:287px;top:789px;width:16px;height:17px;background:#fff;border:1.3px solid #a9aec8;border-radius:3px"></div>
<div class="t" style="left:337px;top:790.47px;font-size:14px;color:#212121;">Chuyển khoản kho bạc trả...</div>
<div class="t" style="left:544px;width:150px;text-align:center;top:790.47px;font-size:14px;color:#212121;letter-spacing:0.65px">14/03/2025</div>
<div class="t" style="left:694px;width:149px;text-align:center;top:790.47px;font-size:14px;color:#212121;letter-spacing:0.65px">14/03/2025</div>
<div class="t" style="left:856px;top:790.47px;font-size:14px;color:#212121;letter-spacing:0.15px;">CKKB00086</div>
<div class="t" style="left:1021px;top:790.47px;font-size:14px;color:#212121;letter-spacing:-0.15px;">Phụ cấp công vụ</div>
<div class="t" style="left:1296px;top:790.47px;font-size:14px;color:#212121;letter-spacing:0.7px;">334</div>
<div class="t" style="left:1406px;top:790.47px;font-size:14px;color:#212121;letter-spacing:0.7px;">1351</div>
<div class="a" style="left:324px;top:785px;width:1px;height:26px;border-left:1px dotted #b5b9c4"></div>
<div class="a" style="left:544px;top:785px;width:1px;height:26px;border-left:1px dotted #b5b9c4"></div>
<div class="a" style="left:694px;top:785px;width:1px;height:26px;border-left:1px dotted #b5b9c4"></div>
<div class="a" style="left:843px;top:785px;width:1px;height:26px;border-left:1px dotted #b5b9c4"></div>
<div class="a" style="left:1008px;top:785px;width:1px;height:26px;border-left:1px dotted #b5b9c4"></div>
<div class="a" style="left:1283px;top:785px;width:1px;height:26px;border-left:1px dotted #b5b9c4"></div>
<div class="a" style="left:1393px;top:785px;width:1px;height:26px;border-left:1px dotted #b5b9c4"></div>
<div class="a" style="left:267px;top:839px;width:1222px;height:1px;background:#c9ccd4"></div>
<div class="a" style="left:287px;top:816px;width:16px;height:17px;background:#fff;border:1.3px solid #a9aec8;border-radius:3px"></div>
<div class="t" style="left:337px;top:817.84px;font-size:14px;color:#212121;">Chuyển khoản kho bạc trả...</div>
<div class="t" style="left:544px;width:150px;text-align:center;top:817.84px;font-size:14px;color:#212121;letter-spacing:0.65px">14/03/2025</div>
<div class="t" style="left:694px;width:149px;text-align:center;top:817.84px;font-size:14px;color:#212121;letter-spacing:0.65px">14/03/2025</div>
<div class="t" style="left:856px;top:817.84px;font-size:14px;color:#212121;letter-spacing:0.15px;">CKKB00086</div>
<div class="t" style="left:1021px;top:817.84px;font-size:14px;color:#212121;letter-spacing:-0.15px;">Tiền thưởng</div>
<div class="t" style="left:1296px;top:817.84px;font-size:14px;color:#212121;letter-spacing:0.7px;">334</div>
<div class="t" style="left:1406px;top:817.84px;font-size:14px;color:#212121;letter-spacing:0.7px;">1351</div>
<div class="a" style="left:324px;top:812px;width:1px;height:27px;border-left:1px dotted #b5b9c4"></div>
<div class="a" style="left:544px;top:812px;width:1px;height:27px;border-left:1px dotted #b5b9c4"></div>
<div class="a" style="left:694px;top:812px;width:1px;height:27px;border-left:1px dotted #b5b9c4"></div>
<div class="a" style="left:843px;top:812px;width:1px;height:27px;border-left:1px dotted #b5b9c4"></div>
<div class="a" style="left:1008px;top:812px;width:1px;height:27px;border-left:1px dotted #b5b9c4"></div>
<div class="a" style="left:1283px;top:812px;width:1px;height:27px;border-left:1px dotted #b5b9c4"></div>
<div class="a" style="left:1393px;top:812px;width:1px;height:27px;border-left:1px dotted #b5b9c4"></div>
<div class="a" style="left:267px;top:866px;width:1222px;height:1px;background:#c9ccd4"></div>
<div class="a" style="left:287px;top:844px;width:16px;height:17px;background:#fff;border:1.3px solid #a9aec8;border-radius:3px"></div>
<div class="t" style="left:337px;top:845.21px;font-size:14px;color:#212121;">Chuyển khoản kho bạc trả...</div>
<div class="t" style="left:544px;width:150px;text-align:center;top:845.21px;font-size:14px;color:#212121;letter-spacing:0.65px">14/03/2025</div>
<div class="t" style="left:694px;width:149px;text-align:center;top:845.21px;font-size:14px;color:#212121;letter-spacing:0.65px">14/03/2025</div>
<div class="t" style="left:856px;top:845.21px;font-size:14px;color:#212121;letter-spacing:0.15px;">CKKB00086</div>
<div class="t" style="left:1021px;top:845.21px;font-size:14px;color:#212121;letter-spacing:-0.15px;">Khoản văn phòng phẩm</div>
<div class="t" style="left:1296px;top:845.21px;font-size:14px;color:#212121;letter-spacing:0.7px;">334</div>
<div class="t" style="left:1406px;top:845.21px;font-size:14px;color:#212121;letter-spacing:0.7px;">1351</div>
<div class="a" style="left:324px;top:840px;width:1px;height:26px;border-left:1px dotted #b5b9c4"></div>
<div class="a" style="left:544px;top:840px;width:1px;height:26px;border-left:1px dotted #b5b9c4"></div>
<div class="a" style="left:694px;top:840px;width:1px;height:26px;border-left:1px dotted #b5b9c4"></div>
<div class="a" style="left:843px;top:840px;width:1px;height:26px;border-left:1px dotted #b5b9c4"></div>
<div class="a" style="left:1008px;top:840px;width:1px;height:26px;border-left:1px dotted #b5b9c4"></div>
<div class="a" style="left:1283px;top:840px;width:1px;height:26px;border-left:1px dotted #b5b9c4"></div>
<div class="a" style="left:1393px;top:840px;width:1px;height:26px;border-left:1px dotted #b5b9c4"></div>
<div class="a" style="left:267px;top:893px;width:1222px;height:1px;background:#c9ccd4"></div>
<div class="a" style="left:287px;top:871px;width:16px;height:17px;background:#fff;border:1.3px solid #a9aec8;border-radius:3px"></div>
<div class="t" style="left:337px;top:872.58px;font-size:14px;color:#212121;">Chuyển khoản kho bạc trả...</div>
<div class="t" style="left:544px;width:150px;text-align:center;top:872.58px;font-size:14px;color:#212121;letter-spacing:0.65px">14/03/2025</div>
<div class="t" style="left:694px;width:149px;text-align:center;top:872.58px;font-size:14px;color:#212121;letter-spacing:0.65px">14/03/2025</div>
<div class="t" style="left:856px;top:872.58px;font-size:14px;color:#212121;letter-spacing:0.15px;">CKKB00086</div>
<div class="t" style="left:1021px;top:872.58px;font-size:14px;color:#212121;letter-spacing:-0.15px;">Khoản điện thoại</div>
<div class="t" style="left:1296px;top:872.58px;font-size:14px;color:#212121;letter-spacing:0.7px;">334</div>
<div class="t" style="left:1406px;top:872.58px;font-size:14px;color:#212121;letter-spacing:0.7px;">1351</div>
<div class="a" style="left:324px;top:867px;width:1px;height:26px;border-left:1px dotted #b5b9c4"></div>
<div class="a" style="left:544px;top:867px;width:1px;height:26px;border-left:1px dotted #b5b9c4"></div>
<div class="a" style="left:694px;top:867px;width:1px;height:26px;border-left:1px dotted #b5b9c4"></div>
<div class="a" style="left:843px;top:867px;width:1px;height:26px;border-left:1px dotted #b5b9c4"></div>
<div class="a" style="left:1008px;top:867px;width:1px;height:26px;border-left:1px dotted #b5b9c4"></div>
<div class="a" style="left:1283px;top:867px;width:1px;height:26px;border-left:1px dotted #b5b9c4"></div>
<div class="a" style="left:1393px;top:867px;width:1px;height:26px;border-left:1px dotted #b5b9c4"></div>
<div class="a" style="left:1489px;top:290px;width:21px;height:605px;background:#fff"></div>
<svg style="left:269px;top:895px" width="5" height="7" viewBox="0 0 5 7"><path d="M4.5 0 V7 L0 3.5 Z" fill="#b3b8c2"/></svg>
<div class="a" style="left:279px;top:896px;width:419px;height:6px;background:#b3b8c2;border-radius:3px"></div>
<svg style="left:1482px;top:895px" width="5" height="7" viewBox="0 0 5 7"><path d="M0.5 0 V7 L5 3.5 Z" fill="#b3b8c2"/></svg>
<div class="t" style="left:285px;top:915.80px;font-size:15px;color:#212121;">Tổng số: <b>96</b> bản ghi</div>
<div class="a" style="left:991px;top:910px;width:220px;height:26px;background:#fff;border:1px solid #5a5a5a;border-radius:3px"></div>
<div class="a" style="left:1186px;top:911px;width:1px;height:24px;background:#c6c9d4"></div>
<svg style="left:1193.0px;top:920.75px" width="10" height="5.5" viewBox="0 0 10 5.5"><path d="M0 0 L10 0 L5.0 5.5 Z" fill="#707070"/></svg>
<div class="t" style="left:999px;top:915.95px;font-size:14px;color:#212121;letter-spacing:0.05px;">20 bản ghi trên 1 trang</div>
<div class="t" style="left:1229px;top:915.95px;font-size:14px;color:#b0b2ba;">Trước</div>
<div class="a" style="left:1285px;top:912px;width:21px;height:22px;background:#fff;border:1px solid #a9aec8"></div>
<div class="t" style="left:1291.5px;top:915.95px;font-size:14px;font-weight:bold;color:#1d1d1d;">1</div>
<div class="t" style="left:1331px;top:915.95px;font-size:14px;color:#212121;">2</div>
<div class="t" style="left:1371px;top:915.95px;font-size:14px;color:#212121;">...</div>
<div class="t" style="left:1414px;top:915.95px;font-size:14px;color:#212121;">5</div>
<div class="t" style="left:1446.5px;top:915.95px;font-size:14px;color:#212121;">Sau</div>
<div class="a" style="left:1295px;top:961px;width:88px;height:26px;background:#fff;border:1px solid #555;border-radius:4px"></div>
<div class="t" style="left:1326.5px;top:966.15px;font-size:14px;font-weight:bold;color:#1d1d1d;letter-spacing:-0.4px;">Hủy</div>
<div class="a" style="left:1401px;top:961px;width:88px;height:26px;background:#5c5ce8;border-radius:4px"></div>
<div class="t" style="left:1428px;top:966.15px;font-size:14px;font-weight:bold;color:#fff;letter-spacing:-0.45px;">Chọn</div>
</body></html>
